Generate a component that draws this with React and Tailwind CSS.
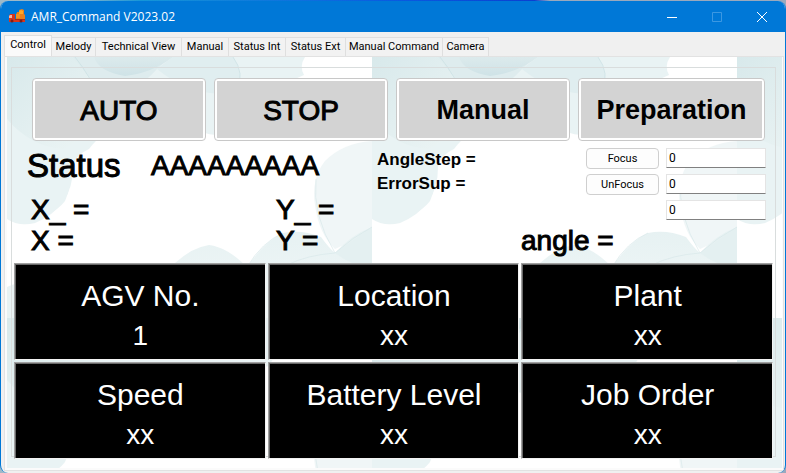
import { useState } from "react";

const TABS = [
  ["Control", "w-12"],
  ["Melody", "w-11"],
  ["Technical View", "w-[86px]"],
  ["Manual", "w-[47px]"],
  ["Status Int", "w-[57px]"],
  ["Status Ext", "w-[60px]"],
  ["Manual Command", "w-[97px]"],
  ["Camera", "w-[46px]"],
];

const MODES = ["AUTO", "STOP", "Manual", "Preparation"];

const PANELS = [
  ["AGV No.", "1"],
  ["Location", "xx"],
  ["Plant", "xx"],
  ["Speed", "xx"],
  ["Battery Level", "xx"],
  ["Job Order", "xx"],
];

function TruckIcon() {
  return (
    <svg width="18" height="16" viewBox="0 0 18 16" aria-hidden="true">
      <path d="M8 5l1-1V3h2V1l3-1 2 1v4l1 1v4H8z" fill="#e8801a" />
      <path d="M11 2l2-1 2 1v3h-4z" fill="#ffa726" />
      <path d="M8 5h4v4H8z" fill="#f59220" />
      <path d="M1 7l1-2h5v5h10v3H1z" fill="#d8361c" />
      <path d="M7 10h10v1H7z" fill="#a92d14" />
      <path d="M1 7l1-1h2v3H1z" fill="#f3b5a2" />
      <circle cx="4" cy="12" r="1.5" fill="#7a1f18" />
      <circle cx="13" cy="12" r="1.5" fill="#7a1f18" />
    </svg>
  );
}

function Watercolor() {
  return (
    <svg className="absolute inset-0 h-full w-full" aria-hidden="true">
      <defs>
        <linearGradient id="wash" x1="0" x2="1" y1="0" y2="1">
          <stop offset="0" stopColor="#d8e9eb" />
          <stop offset="1" stopColor="#edf5f5" />
        </linearGradient>
        <linearGradient id="fade" x1="0" x2="0" y1="0" y2="1">
          <stop offset="0" stopColor="#e6f1f2" />
          <stop offset="1" stopColor="#f2f8f8" />
        </linearGradient>
        <linearGradient id="drop" x1="0" x2="0" y1="0" y2="1">
          <stop offset="0" stopColor="#dceaec" />
          <stop offset="1" stopColor="#cfe3e7" />
        </linearGradient>
        <pattern id="tile" width="365" height="261" patternUnits="userSpaceOnUse">
          <rect width="365" height="261" fill="#fff" />
          <path d="M0 0H298Q292 9 297 18Q272 28 262 48Q240 52 232 66Q215 82 198 76Q185 86 170 78Q140 74 120 68Q95 74 82 92Q68 98 66 110Q66 150 28 166Q12 170 0 162Z" fill="#e9f3f4" />
          <path d="M0 0H68Q90 30 92 50Q80 82 56 92Q24 90 0 62Z" fill="url(#wash)" />
          <path d="M66 0Q84 20 91 38Q120 45 150 12Q160 4 158 0Z" fill="#deecee" />
          <path d="M87 0Q92 15 118 19Q145 16 166 0Z" fill="url(#drop)" />
          <path d="M166 0H226Q238 16 230 34Q190 44 150 12Z" fill="#e0eef0" />
          <path d="M0 85Q30 88 46 98Q72 112 58 144Q42 165 0 160Z" fill="#e9f3f4" />
          <path d="M365 84Q336 86 318 104Q304 122 308 148Q312 177 328 192Q346 184 365 172Z" fill="#f0f6f7" />
          <path d="M168 206Q186 190 202 188Q220 190 240 210Q258 184 276 176Q294 172 314 180Q322 191 328 196Q344 178 365 170V261H150Z" fill="url(#fade)" />
          <path d="M328 196L365 170V212Q344 208 328 196Z" fill="#e4f0f1" />
          <path d="M309 122Q305 158 328 196M328 196Q346 180 365 170M240 210Q255 185 276 176M328 196Q300 198 280 208" fill="none" stroke="#d5e6e8" opacity=".6" />
          <path d="M68 0Q84 20 91 40M226 0Q238 16 230 34" fill="none" stroke="#c6dde1" opacity=".6" />
          <path d="M0 230Q10 224 20 228V261H0Z" fill="#e8f2f3" />
        </pattern>
      </defs>
      <rect width="100%" height="100%" fill="url(#tile)" />
    </svg>
  );
}

const stroke = "[-webkit-text-stroke:1px_black]";

function Label({ children }) {
  return <div className={`text-[28px] leading-[31px] whitespace-nowrap ${stroke}`}>{children}</div>;
}

function NumberBox({ label }) {
  return (
    <input
      aria-label={label}
      defaultValue="0"
      className="block h-5 w-full border border-[#e4e4e4] border-b-[#808080] bg-white px-[2px] font-[Roboto,sans-serif] text-xs outline-none"
    />
  );
}

function SmallButton({ children }) {
  return (
    <button className="h-[21px] w-full rounded-[4px] border border-[#cfcfcf] bg-[#fdfdfd] font-[Roboto,sans-serif] text-[11px] leading-4">
      {children}
    </button>
  );
}

export default function App() {
  const [active, setActive] = useState("Control");
  return (
    <div className="flex min-h-screen flex-col bg-[linear-gradient(90deg,#9fb9c8_0%,#8fb5c8_10%,#1596d8_18%,#0a5be0_50%,#0b3fd0_68%,#9aa9bd_70%)] pt-px font-['Liberation_Sans',Arial,sans-serif] text-black">
      <div className="flex flex-1 flex-col overflow-hidden rounded-lg border-x border-[#0078d7] bg-[#f0f0f0]">
        <header className="flex h-[31px] items-center bg-[#0078d7] pl-[7px] text-white">
          <TruckIcon />
          <h1 className="ml-[5px] flex-1 font-['Open_Sans','Noto_Sans',sans-serif] text-xs">AMR_Command V2023.02</h1>
          <button aria-label="Minimize" className="flex h-full w-[45px] items-center justify-center">
            <svg width="10" height="10" stroke="#fff"><path d="M0 5.5H10" /></svg>
          </button>
          <button aria-label="Maximize" disabled className="flex h-full w-[45px] items-center justify-center">
            <svg width="10" height="10" fill="none" stroke="#3c98e2"><path d="M.5 .5H9.5V9.5H.5Z" /></svg>
          </button>
          <button aria-label="Close" className="flex h-full w-[46px] items-center justify-center">
            <svg width="10" height="10" stroke="#fff"><path d="M0 0L10 10M10 0L0 10" /></svg>
          </button>
        </header>

        <nav role="tablist" className="flex h-6 items-end pl-[3px] font-[Roboto,sans-serif] text-[11px]">
          {TABS.map(([name, width]) => (
            <button
              key={name}
              role="tab"
              aria-selected={name === active}
              onClick={() => setActive(name)}
              className={`${width} whitespace-nowrap border-r border-t border-[#dfdfdf] ${
                name === active ? "h-[21px] border-l bg-[#fafafa] pb-px" : "h-[19px] bg-[#f2f2f2] pt-px"
              }`}
            >
              {name}
            </button>
          ))}
        </nav>

        <main className="mr-px mb-[2px] ml-[3px] flex flex-1 flex-col border border-[#e2e2e2] bg-[#fbfbfb] pr-px pb-[2px] pl-[2px]">
          <div className="relative flex-1">
            <Watercolor />
            <div className="relative pt-[10px] pr-[6px] pb-[10px] pl-1">
              <section className="border border-[#d9dddd] px-[2px]">
                <div className="grid grid-cols-[174fr_174fr_174fr_187fr] gap-2 pt-[10px] pr-2 pl-[18px]">
                  {MODES.map((mode) => (
                    <button
                      key={mode}
                      className="h-[63px] rounded-[4px] border border-[#c8c8c8] bg-white p-[2px]"
                    >
                      <span className={`flex h-full items-center justify-center bg-[#d3d3d3] pt-[2px] ${
                        mode.length > 4 ? "text-[27px] font-bold" : `text-[28px] ${stroke}`
                      }`}>
                        {mode}
                      </span>
                    </button>
                  ))}
                </div>

                <div className="flex pt-[7px] pr-[7px] pl-[13px]">
                  <div className="flex-1">
                    <div className="flex h-[46px]">
                      <div className={`w-[124px] text-[33px] leading-9 ${stroke}`}>Status</div>
                      <div className="w-[226px] pt-[2px]">
                        <Label>AAAAAAAAA</Label>
                      </div>
                      <div className="text-[17px] leading-6 font-bold">
                        <div>AngleStep =</div>
                        <div>ErrorSup =</div>
                      </div>
                    </div>
                    <div className="flex pl-1">
                      <div className="w-[245px]"><Label>X_ =</Label></div>
                      <Label>Y_ =</Label>
                    </div>
                  </div>
                  <div className="grid w-[180px] grid-cols-[73px_100px] content-start gap-x-[7px] gap-y-[5px]">
                    <SmallButton>Focus</SmallButton>
                    <NumberBox label="Focus value" />
                    <SmallButton>UnFocus</SmallButton>
                    <NumberBox label="UnFocus value" />
                    <div className="col-start-2"><NumberBox label="Offset value" /></div>
                  </div>
                </div>

                <div className="grid grid-cols-[245px_245px_1fr] pb-[7px] pl-[17px]">
                  <Label>X =</Label>
                  <Label>Y =</Label>
                  <Label>angle =</Label>
                </div>

                <div className="-mb-[3px] grid grid-cols-3 gap-[2px]">
                  {PANELS.map(([title, value]) => (
                    <div
                      key={title}
                      className="h-[97px] border border-t-[#a0a0a0] border-r-[#f2f2f2] border-b-[#f2f2f2] border-l-[#a0a0a0]"
                    >
                      <div className="h-full border-t border-l border-[#696969] bg-black pt-[11px] text-center text-white">
                        <div className="text-[30px] leading-10">{title}</div>
                        <div className="text-[28px] leading-10">{value}</div>
                      </div>
                    </div>
                  ))}
                </div>
              </section>
            </div>
          </div>
        </main>
      </div>
    </div>
  );
}
